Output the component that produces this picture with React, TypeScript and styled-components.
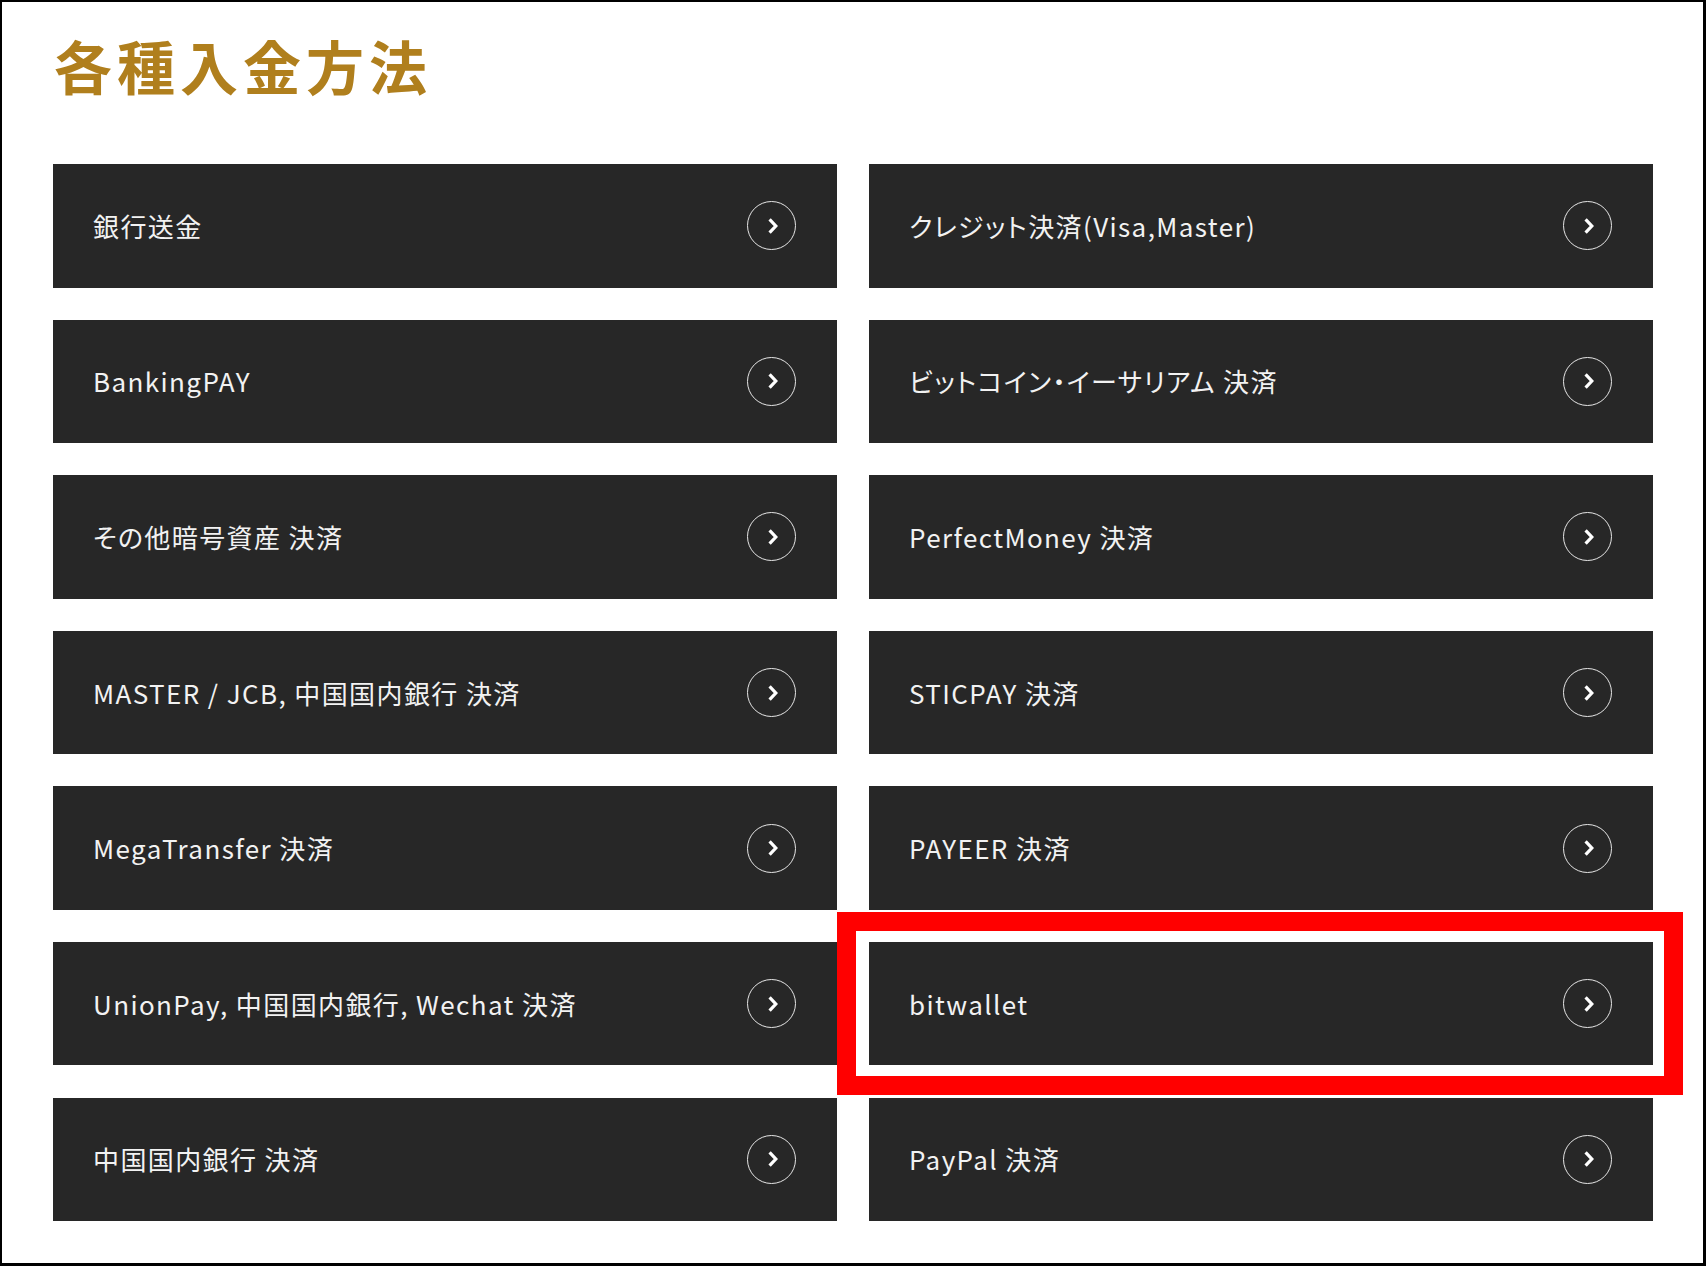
import React from "react";
import styled, { createGlobalStyle } from "styled-components";

const GlobalStyle = createGlobalStyle`
  html, body {
    margin: 0;
    padding: 0;
    background: #ffffff;
  }
  * {
    box-sizing: border-box;
  }
`;

interface MethodInterface {
  label: string;
  highlighted?: boolean;
}

const methods: MethodInterface[] = [
  { label: "銀行送金" },
  { label: "クレジット決済(Visa,Master)" },
  { label: "BankingPAY" },
  { label: "ビットコイン・イーサリアム 決済" },
  { label: "その他暗号資産 決済" },
  { label: "PerfectMoney 決済" },
  { label: "MASTER / JCB, 中国国内銀行 決済" },
  { label: "STICPAY 決済" },
  { label: "MegaTransfer 決済" },
  { label: "PAYEER 決済" },
  { label: "UnionPay, 中国国内銀行, Wechat 決済" },
  { label: "bitwallet", highlighted: true },
  { label: "中国国内銀行 決済" },
  { label: "PayPal 決済" }
];

const ArrowIcon: React.FunctionComponent = () => (
  <ArrowCircle>
    <svg width="12" height="18" viewBox="0 0 12 18" fill="none">
      <path d="M2.6 2.4 L8.8 9 L2.6 15.6" stroke="#ffffff" strokeWidth="3.2" strokeLinejoin="miter" />
    </svg>
  </ArrowCircle>
);

const App: React.FunctionComponent = () => (
  <>
    <GlobalStyle />
    <Page>
      <Title>各種入金方法</Title>
      <MethodGrid>
        {methods.map((method, index) => (
          <MethodCard href="#" key={index}>
            <MethodLabel>{method.label}</MethodLabel>
            <ArrowIcon />
            {method.highlighted && <Highlight />}
          </MethodCard>
        ))}
      </MethodGrid>
    </Page>
  </>
);

const Page = styled.div`
  width: 1706px;
  height: 1266px;
  border-style: solid;
  border-color: #000000;
  border-width: 2px 3px 3px 2px;
  padding: 34px 0 0 51px;
  background: #ffffff;
  font-family: "Noto Sans CJK JP", "Noto Sans", sans-serif;
`;

const Title = styled.h1`
  margin: 0 0 0 1px;
  font-size: 58px;
  line-height: 1;
  font-weight: 700;
  letter-spacing: 5px;
  color: #b07f1d;
`;

const MethodGrid = styled.div`
  margin-top: 70px;
  width: 1600px;
  display: grid;
  grid-template-columns: 784px 784px;
  grid-auto-rows: 123.5px;
  column-gap: 32px;
  row-gap: 32.1px;
`;

const MethodCard = styled.a`
  position: relative;
  display: flex;
  align-items: center;
  justify-content: space-between;
  padding: 0 41px 0 40px;
  background: #272727;
  text-decoration: none;
`;

const MethodLabel = styled.span`
  font-size: 26px;
  line-height: 1;
  letter-spacing: 1.4px;
  font-feature-settings: "palt";
  color: #f2f2f2;
  white-space: nowrap;
`;

const ArrowCircle = styled.span`
  display: flex;
  align-items: center;
  justify-content: center;
  width: 49px;
  height: 49px;
  padding-left: 2px;
  border: 1.5px solid #e6e6e6;
  border-radius: 50%;
  flex-shrink: 0;
`;

const Highlight = styled.span`
  position: absolute;
  top: -30px;
  right: -30px;
  bottom: -30px;
  left: -32px;
  border: 19.5px solid #ff0000;
  pointer-events: none;
`;

export default App;
